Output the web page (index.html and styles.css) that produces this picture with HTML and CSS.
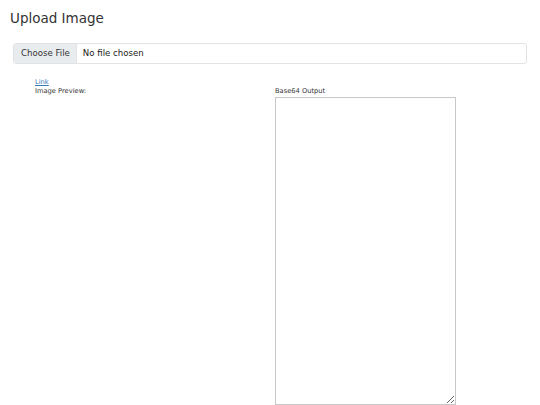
FILE: index.html
```html
<!DOCTYPE html>
<html>
<head>
<meta charset="utf-8">
<link rel="stylesheet" href="styles.css">
</head>
<body>
<div class="page">
  <h1 class="title">Upload Image</h1>
  <div class="file-input">
    <span class="file-btn">Choose File</span>
    <span class="file-name">No file chosen</span>
  </div>
  <div class="row">
    <div class="col-left">
      <a class="link" href="#">Link</a>
      <div class="label">Image Preview:</div>
    </div>
    <div class="col-right">
      <div class="label out-label">Base64 Output</div>
      <textarea class="output"></textarea>
    </div>
  </div>
</div>
</body>
</html>
```

FILE: styles.css
```css
html, body {
  margin: 0;
  padding: 0;
  background: #fff;
  font-family: "DejaVu Sans", sans-serif;
  color: #333;
}
.page {
  padding: 8px 13px 0 13px;
  width: 514px;
}
.title {
  font-size: 13.5px;
  font-weight: 400;
  margin: 0 0 15px -3px;
  line-height: 20px;
  color: #333;
}
.file-input {
  display: flex;
  height: 19px;
  border: 1px solid #e3e3e3;
  border-radius: 3px;
  overflow: hidden;
  font-size: 8.6px;
  line-height: 19px;
  color: #222;
}
.file-btn {
  background: #e9ecef;
  padding: 0 6px 0 7px;
  border-right: 1px solid #e3e3e3;
  white-space: nowrap;
  color: #333;
}
.file-name {
  padding: 0 6px;
  white-space: nowrap;
}
.row {
  display: flex;
  margin-top: 14px;
}
.col-left {
  width: 240px;
  padding-left: 22px;
}
.link {
  color: #337ab7;
  text-decoration: underline;
  display: block;
  font-size: 6.7px;
  line-height: 9px;
}
.label {
  font-size: 6.7px;
  line-height: 9px;
  color: #333;
}
.col-right {
  display: flex;
  flex-direction: column;
  margin-top: 9px;
}
.out-label {
  margin-bottom: 1px;
}
.output {
  width: 177px;
  height: 304px;
  margin: 0;
  border: 1px solid #c8c8c8;
  padding: 1px;
  resize: both;
}
```
